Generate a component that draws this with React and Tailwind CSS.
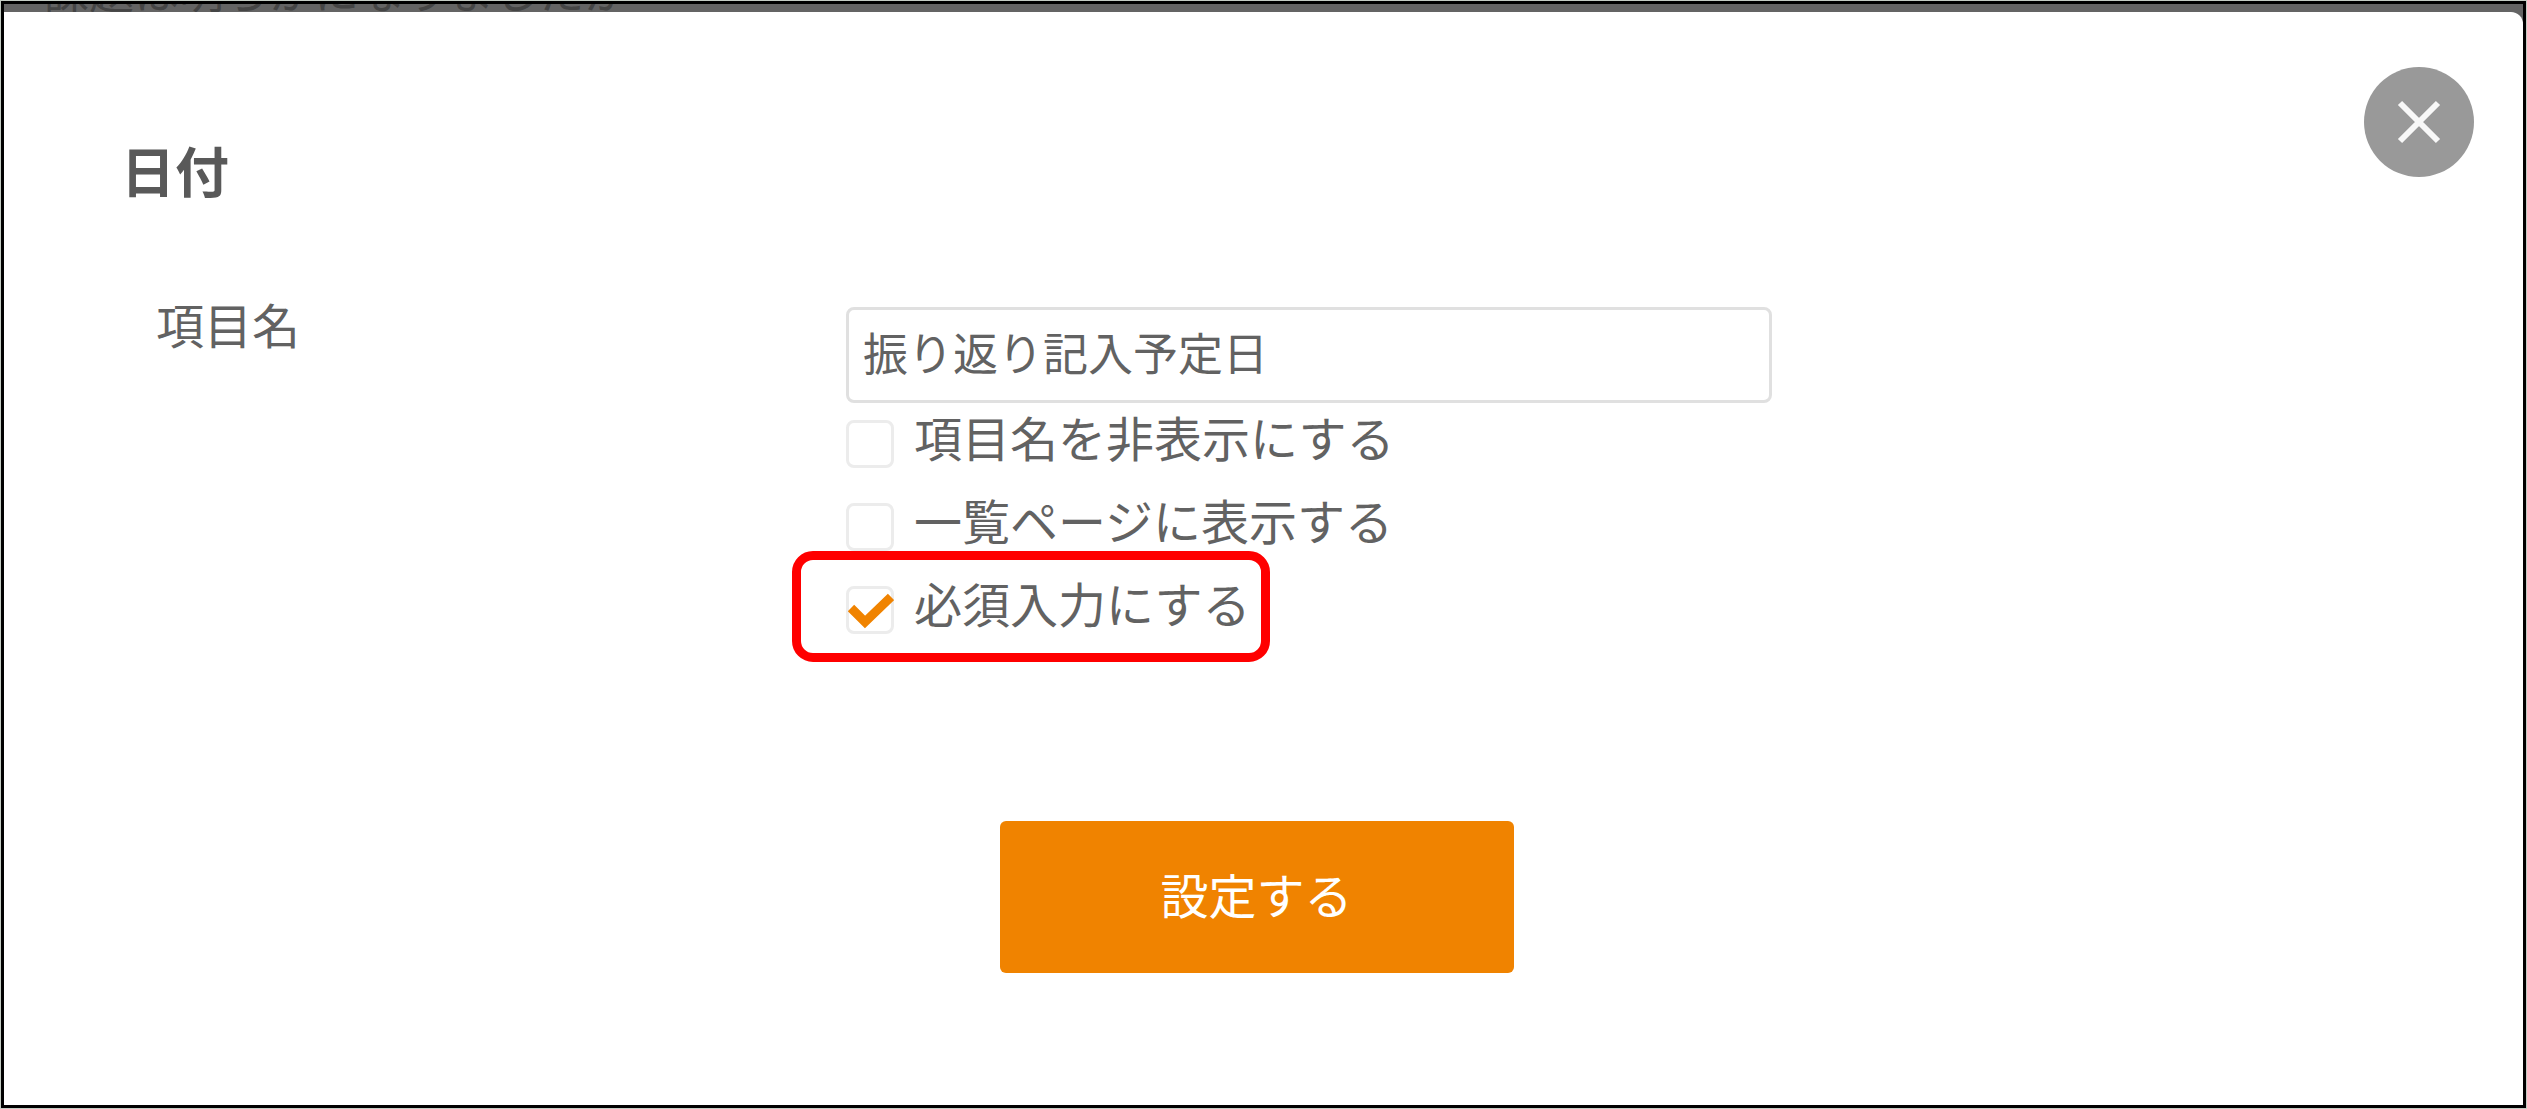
import React, { useState } from 'react';

const OPTIONS = [
  { id: 'hideName', label: '項目名を非表示にする' },
  { id: 'showInList', label: '一覧ページに表示する' },
  { id: 'required', label: '必須入力にする', highlighted: true },
];

const Checkbox = ({ id, label, checked, highlighted, onChange }) => (
  <div className="relative flex w-fit items-start gap-5">
    {highlighted && (
      <div className="pointer-events-none absolute -top-[19px] -right-5 -bottom-7 -left-[54px] rounded-[21px] border-[9px] border-[#ff0000]"></div>
    )}
    <div className="relative mt-4 size-12 shrink-0">
      <input
        id={id}
        type="checkbox"
        checked={checked}
        onChange={onChange}
        className="block size-12 appearance-none rounded-lg border-3 border-[#ececec] bg-white"
      />
      {checked && (
        <svg className="pointer-events-none absolute inset-0" width="48" height="48" viewBox="0 0 48 48" fill="none">
          <path d="M5 22 L19 36 L45 11" stroke="#f08300" strokeWidth="9" />
        </svg>
      )}
    </div>
    <label htmlFor={id} className="text-[48px] leading-[64px]">
      {label}
    </label>
  </div>
);

const App = () => {
  const [name, setName] = useState('振り返り記入予定日');
  const [checked, setChecked] = useState({ hideName: false, showInList: false, required: true });

  const toggle = (id) => setChecked((prev) => ({ ...prev, [id]: !prev[id] }));

  return (
    <div className="flex min-h-screen flex-col border border-[#c4ccc4] font-['Noto_Sans_CJK_JP',sans-serif] text-[#626262]">
      <div className="flex grow flex-col border-[3px] border-black bg-[#646464]">
        {/* Page behind the dialog */}
        <div className="flex h-2 items-end overflow-hidden pl-10">
          <p className="text-[45px] leading-[45px] whitespace-nowrap text-[#454545]">課題は明らかになりましたか</p>
        </div>

        {/* Dialog */}
        <div role="dialog" aria-labelledby="dialog-title" className="grow rounded-tr-xl bg-white">
          <div className="flex items-start justify-between pt-[55px] pr-[49px] pl-[117px]">
            <h2 id="dialog-title" className="pt-[63px] text-[54px] leading-[80px] font-bold text-[#595959]">
              日付
            </h2>
            <button
              type="button"
              aria-label="閉じる"
              className="flex size-[110px] items-center justify-center rounded-full bg-[#999999]"
            >
              <svg width="44" height="44" viewBox="0 0 44 44" fill="none">
                <path d="M3 3 L41 41 M41 3 L3 41" stroke="#f8f8f8" strokeWidth="6" />
              </svg>
            </button>
          </div>

          <form onSubmit={(e) => e.preventDefault()}>
            <div className="flex items-start pt-[97px] pl-[152px]">
              <label htmlFor="itemName" className="-mt-4 w-[690px] text-[48px] leading-[64px]">
                項目名
              </label>
              <div className="grow">
                <input
                  id="itemName"
                  type="text"
                  value={name}
                  onChange={(e) => setName(e.target.value)}
                  className="block h-24 w-full max-w-[926px] rounded-lg border-3 border-[#e0e0e0] bg-white px-[14px] pb-2 text-[45px]"
                />
                <div className="flex flex-col gap-[19px] pt-px">
                  {OPTIONS.map((option) => (
                    <Checkbox
                      key={option.id}
                      {...option}
                      checked={checked[option.id]}
                      onChange={() => toggle(option.id)}
                    />
                  ))}
                </div>
              </div>
            </div>

            <div className="flex justify-center pt-[187px] pr-[14px]">
              <button type="submit" className="h-[152px] w-[514px] rounded-md bg-[#f08300] pb-2 text-[48px] text-white">
                設定する
              </button>
            </div>
          </form>
        </div>
      </div>
    </div>
  );
};

export default App;
